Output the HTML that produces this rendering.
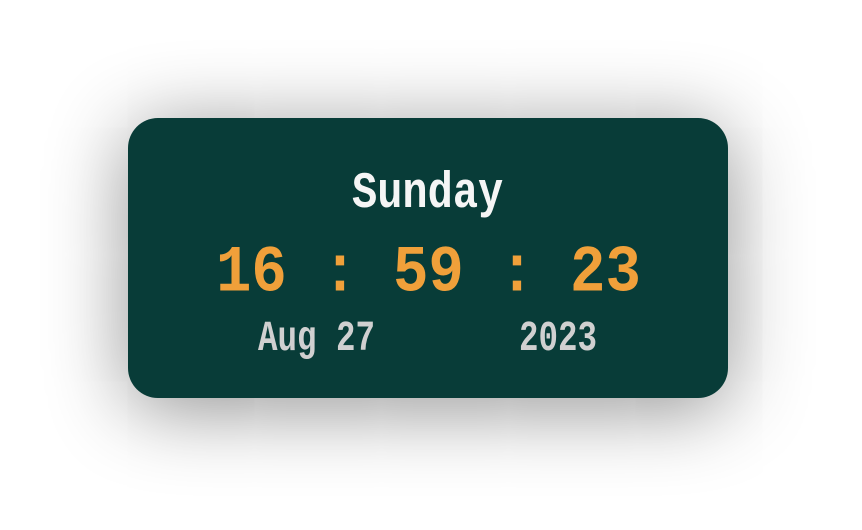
<!DOCTYPE html>
<html><head><style>
html,body{margin:0;padding:0;width:862px;height:530px;background:#fff;overflow:hidden}
.card{position:absolute;left:128px;top:118px;width:600px;height:280px;border-radius:30px;background:#083c38;box-shadow:0 10px 80px rgba(0,0,0,0.45)}
.t{position:absolute;font-family:"Liberation Mono",monospace;font-weight:bold;white-space:pre;line-height:1;transform-origin:0 0}
</style></head><body>
<div class="card"></div>
<div class="t" style="left:352px;top:168px;font-size:42px;color:#f5f5f5;transform:scaleY(1.22)">Sunday</div>
<div class="t" style="left:216px;top:240px;font-size:59px;color:#f0a03a;transform:scaleY(1.12)">16 : 59 : 23</div>
<div class="t" style="left:258px;top:319px;font-size:32.5px;color:#d0d0d0;transform:scaleY(1.3)">Aug 27</div>
<div class="t" style="left:519px;top:319px;font-size:32.5px;color:#d0d0d0;transform:scaleY(1.3)">2023</div>
</body></html>
